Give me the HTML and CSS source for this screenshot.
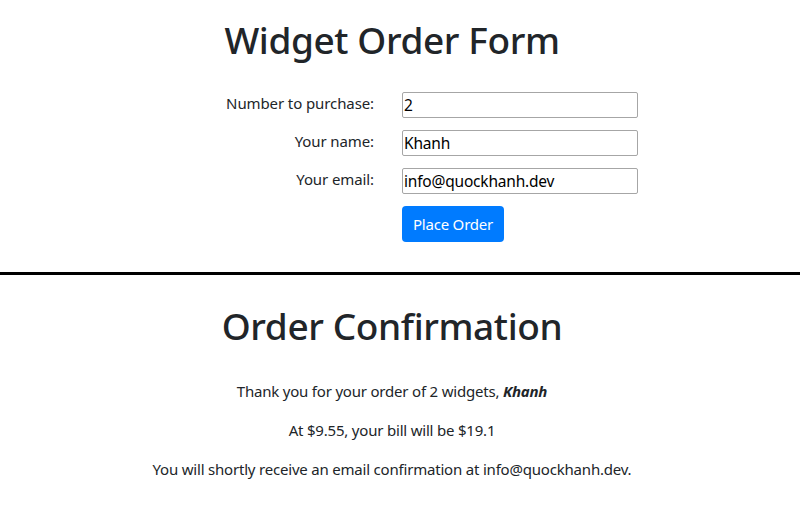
FILE: index.html
```html
<!DOCTYPE html>
<html lang="en">
<head>
<meta charset="utf-8">
<title>Widget Order Form</title>
<link rel="stylesheet" href="styles.css">
</head>
<body>
<div class="page">
  <section class="order">
    <h1 class="title">Widget Order Form</h1>
    <form class="form">
      <label class="label" for="qty">Number to purchase:</label>
      <input class="input" id="qty" type="text" value="2">
      <label class="label" for="name">Your name:</label>
      <input class="input" id="name" type="text" value="Khanh">
      <label class="label" for="email">Your email:</label>
      <input class="input" id="email" type="text" value="info@quockhanh.dev">
      <span class="spacer"></span>
      <button class="btn" type="button">Place Order</button>
    </form>
  </section>
</div>
<hr class="divider">
<div class="page">
  <section class="confirm">
    <h1 class="title title-confirm">Order Confirmation</h1>
    <p class="line">Thank you for your order of 2 widgets, <b><i>Khanh</i></b></p>
    <p class="line">At $9.55, your bill will be $19.1</p>
    <p class="line">You will shortly receive an email confirmation at info@quockhanh.dev.</p>
  </section>
</div>
</body>
</html>
```
FILE: styles.css
```css
html, body {
  margin: 0;
  padding: 0;
  background: #fff;
}
body {
  font-family: "Noto Sans", "Open Sans", sans-serif;
  font-size: 15px;
  letter-spacing: -0.2px;
  color: #212529;
  overflow: hidden;
}
.page {
  width: 784px;
}
.title {
  font-size: 37px;
  font-weight: 500;
  letter-spacing: -0.4px;
  line-height: 1.2;
  text-align: center;
  margin: 0;
}
.order {
  padding-top: 18px;
}
.form {
  display: grid;
  grid-template-columns: 374px 236px;
  column-gap: 28px;
  row-gap: 12px;
  margin-top: 30px;
}
.label {
  text-align: right;
  line-height: 24px;
  margin-top: -1px;
  letter-spacing: -0.1px;
}
.input {
  box-sizing: border-box;
  height: 26px;
  margin: 0;
  padding: 0 2px 0 1px;
  border: 1px solid #a6a6a6;
  border-radius: 2px;
  font-family: inherit;
  font-size: 15.5px;
  letter-spacing: -0.2px;
  color: #000;
  background: #fff;
}
.btn {
  justify-self: start;
  width: 102px;
  height: 36px;
  border: none;
  border-radius: 4px;
  background: #007bff;
  color: #fff;
  font-family: inherit;
  font-size: 15px;
  letter-spacing: -0.2px;
  padding: 0;
}
.divider {
  margin: 30px 0 0;
  border: 0;
  height: 3px;
  background: #000;
}
.confirm {
  padding-top: 29px;
  text-align: center;
}
.title-confirm {
  margin-bottom: 30px;
}
.line {
  margin: 0 0 15px;
  line-height: 24px;
}
```
